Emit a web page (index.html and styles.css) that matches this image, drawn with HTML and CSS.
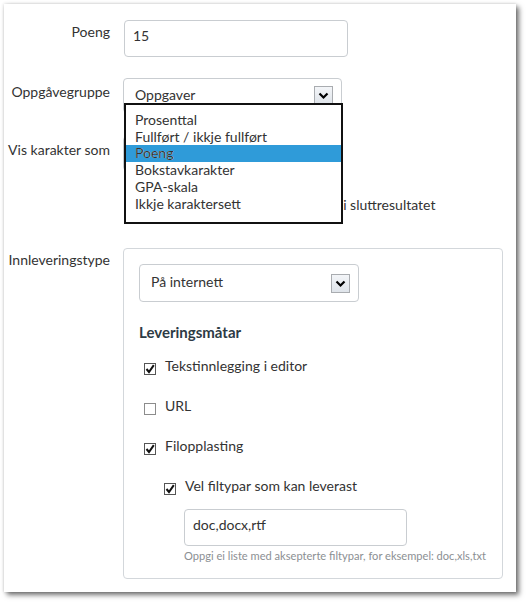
FILE: index.html
```html
<!DOCTYPE html>
<html lang="nn">
<head>
<meta charset="utf-8">
<link rel="stylesheet" href="styles.css">
</head>
<body>
<div class="panel">
  <div class="row r1">
    <div class="label">Poeng</div>
    <div class="ctrl">
      <div class="input points">15</div>
    </div>
  </div>

  <div class="row r2">
    <div class="label">Oppgåvegruppe</div>
    <div class="ctrl rel">
      <div class="select group">
        <span class="val">Oppgaver</span>
        <span class="arrow"><svg width="17" height="17" viewBox="0 0 17 17"><polyline points="4.5,6.5 8.5,10.5 12.5,6.5" fill="none" stroke="#000" stroke-width="2.2"/></svg></span>
      </div>
      <ul class="dropdown">
        <li>Prosenttal</li>
        <li>Fullført / ikkje fullført</li>
        <li class="sel">Poeng</li>
        <li>Bokstavkarakter</li>
        <li>GPA-skala</li>
        <li>Ikkje karaktersett</li>
      </ul>
    </div>
  </div>

  <div class="row r3">
    <div class="label">Vis karakter som</div>
    <div class="ctrl">
      <div class="select grade">
        <span class="val">Poeng</span>
        <span class="arrow"><svg width="17" height="17" viewBox="0 0 17 17"><polyline points="4.5,6.5 8.5,10.5 12.5,6.5" fill="none" stroke="#000" stroke-width="2.2"/></svg></span>
      </div>
      <div class="check omit"><span class="box"></span><span>Ikkje tel denne oppgåva med i sluttresultatet</span></div>
    </div>
  </div>

  <div class="row r4">
    <div class="label">Innleveringstype</div>
    <div class="ctrl">
      <div class="fieldset">
        <div class="select type">
          <span class="val">På internett</span>
          <span class="arrow"><svg width="17" height="17" viewBox="0 0 17 17"><polyline points="4.5,6.5 8.5,10.5 12.5,6.5" fill="none" stroke="#000" stroke-width="2.2"/></svg></span>
        </div>
        <div class="heading">Leveringsmåtar</div>
        <div class="check first"><span class="box on"><svg width="10" height="10" viewBox="0 0 10 10"><polyline points="1.5,5 4,8 8.8,1.2" fill="none" stroke="#111" stroke-width="2"/></svg></span><span>Tekstinnlegging i editor</span></div>
        <div class="check"><span class="box"></span><span>URL</span></div>
        <div class="check"><span class="box on"><svg width="10" height="10" viewBox="0 0 10 10"><polyline points="1.5,5 4,8 8.8,1.2" fill="none" stroke="#111" stroke-width="2"/></svg></span><span>Filopplasting</span></div>
        <div class="check sub"><span class="box on"><svg width="10" height="10" viewBox="0 0 10 10"><polyline points="1.5,5 4,8 8.8,1.2" fill="none" stroke="#111" stroke-width="2"/></svg></span><span>Vel filtypar som kan leverast</span></div>
        <div class="input types">doc,docx,rtf</div>
        <div class="hint">Oppgi ei liste med aksepterte filtypar, for eksempel: doc,xls,txt</div>
      </div>
    </div>
  </div>
</div>
</body>
</html>
```

FILE: styles.css
```css
* { box-sizing: border-box; }

html, body { height: 604px; }

body {
  margin: 0;
  background: #fff;
  font-family: Lato, "Noto Sans", sans-serif;
  font-size: 14px;
  line-height: 20px;
  color: #333;
  overflow: hidden;
}

.panel {
  margin: 4px 0 0 4px;
  width: 512px;
  height: 588px;
  background: #fff;
  padding-top: 16px;
  box-shadow: 3px 3px 5px rgba(0, 0, 0, 0.55), 0 0 3px rgba(0, 0, 0, 0.18);
}

.row {
  display: grid;
  grid-template-columns: 106px 1fr;
  column-gap: 13px;
}

.label {
  text-align: right;
  padding-top: 2px;
}

.r2 { margin-top: 21px; }
.r2 .label { padding-top: 4px; }
.r3 { margin-top: 23px; }
.r3 .label { padding-top: 4px; }
.r4 { margin-top: 33px; }
.r4 .label { padding-top: 2px; }

.rel { position: relative; }

.input {
  height: 37px;
  border: 1px solid #c9cdd1;
  border-radius: 4px;
  padding: 5px 8px 0;
}

.points {
  width: 224px;
  margin-left: 1px;
}

.select {
  display: flex;
  justify-content: space-between;
  align-items: center;
  border: 1px solid #c9cdd1;
  border-radius: 4px;
  padding: 0 8px 0 11px;
  background: #fff;
}

.select .val {
  position: relative;
  top: -1px;
}

.group, .grade {
  width: 219px;
  height: 35px;
}

.type {
  width: 220px;
  height: 38px;
}

.arrow {
  width: 19px;
  height: 19px;
  border: 1px solid #a9acb0;
  background: linear-gradient(#f3f5f8, #dfe4ea);
  display: flex;
}

.dropdown {
  position: absolute;
  top: 25px;
  left: 1px;
  width: 219px;
  height: 121px;
  margin: 0;
  padding: 7px 0 0;
  list-style: none;
  background: #fff;
  border: 2px solid #111;
  line-height: 16.7px;
}

.dropdown li { padding-left: 9px; }

.dropdown .sel {
  background: #2f9bd9;
  color: #fff;
}

.check {
  display: flex;
  margin-top: 20px;
}

.check .box {
  flex: none;
  width: 12px;
  height: 12px;
  margin: 7px 9px 0 5px;
  border: 1px solid #8c8c8c;
  background: #fff;
  display: flex;
  align-items: center;
  justify-content: center;
}

.check .box.on { border-color: #555; }

.omit {
  margin-top: 24px;
}

.omit .box {
  margin-left: 20px;
}

.fieldset {
  width: 380px;
  height: 331px;
  border: 1px solid #d3d7db;
  border-radius: 4px;
  padding: 15px 15px 0;
}

.heading {
  margin-top: 20px;
  font-size: 15px;
  font-weight: bold;
  color: #2d3b45;
}

.check.first { margin-top: 14px; }

.check.sub { padding-left: 20px; }

.types {
  width: 223px;
  margin: 13px 0 0 45px;
}

.hint {
  margin: 2px 0 0 45px;
  font-size: 11.1px;
  line-height: 15px;
  color: #8b8f93;
}
```
